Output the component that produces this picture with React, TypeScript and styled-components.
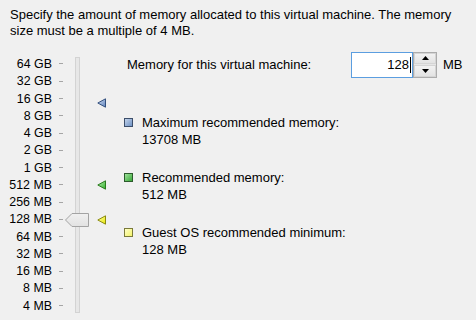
import React from "react";
import styled, { createGlobalStyle } from "styled-components";

const GlobalStyle = createGlobalStyle`
  html, body { margin: 0; padding: 0; background: #f0f0f0; }
  body {
    font-family: "Liberation Sans", Arial, sans-serif;
    font-size: 13px;
    color: #000;
    width: 476px;
    height: 320px;
    overflow: hidden;
  }
`;

const Page = styled.div`
  width: 476px;
  height: 320px;
  background: #f0f0f0;
`;

const Intro = styled.p`
  margin: 0;
  padding: 7px 10px 0 10px;
  line-height: 16px;
`;

const Main = styled.div`
  margin-top: 11px;
  display: flex;
  align-items: flex-start;
  height: 270px;
`;

const ROW = 17.28;
const FIRST = 14; // center of first row relative to Main

const Scale = styled.div`
  display: grid;
  grid-auto-rows: ${ROW}px;
  padding-top: ${FIRST - ROW / 2}px;
  width: 63px;
`;

const ScaleRow = styled.div`
  display: flex;
  align-items: center;
`;

const ScaleLabel = styled.span`
  width: 52px;
  text-align: right;
  white-space: nowrap;
  font-size: 12.4px;
  line-height: 14px;
`;

const Tick = styled.span`
  margin-left: 7px;
  width: 4px;
  height: 1px;
  background: #a5a5a5;
`;

const SliderArea = styled.div`
  position: relative;
  width: 43px;
  height: 270px;
  flex: none;
`;

const Track = styled.div`
  margin: 7px 0 0 12px;
  width: 3px;
  height: 254px;
  border: 1px solid #d3d3d3;
  background: #e7e7e7;
`;

const Thumb = styled.svg`
  position: absolute;
  left: 2px;
  width: 24px;
  height: 14px;
`;

const Marker = styled.svg`
  position: absolute;
  left: 34px;
  width: 10px;
  height: 10px;
`;

const Content = styled.div`
  margin-left: 18px;
  display: flex;
  flex-direction: column;
  flex: 1;
`;

const MemoryRow = styled.div`
  display: flex;
  align-items: center;
  height: 27px;
  margin-top: 1px;
`;

const MemoryLabel = styled.span`
  margin-left: 3px;
  width: 224px;
  white-space: nowrap;
`;

const SpinBox = styled.div`
  display: flex;
  height: 26px;
`;

const Field = styled.div`
  width: 59px;
  height: 24px;
  border: 1px solid #5b9ee0;
  background: #fff;
  display: flex;
  align-items: center;
  justify-content: flex-end;
  padding-right: 1px;
  box-sizing: content-box;
`;

const FieldText = styled.span`
  line-height: 14px;
`;

const Caret = styled.span`
  display: inline-block;
  width: 1px;
  height: 16px;
  background: #000;
  margin-left: 1px;
`;

const Spinner = styled.div`
  display: flex;
  flex-direction: column;
  width: 22px;
  height: 24px;
  border: 1px solid #acacac;
  background: #e6e6e6;
  gap: 1px;
`;

const SpinButton = styled.div`
  flex: 1;
  display: flex;
  align-items: center;
  justify-content: center;
  background: linear-gradient(#f2f2f2, #e3e3e3);
  border: 1px solid #d5d5d5;
`;

const Unit = styled.span`
  margin-left: 6px;
`;

const Legend = styled.div`
  display: flex;
  flex-direction: column;
  gap: 21px;
  margin-top: 36px;
`;

const LegendItem = styled.div`
  display: grid;
  grid-template-columns: 18px auto;
  line-height: 17px;
`;

const Swatch = styled.span<{ $fill: string; $border: string }>`
  width: 7px;
  height: 7px;
  margin-top: 4px;
  border: 1px solid ${(p) => p.$border};
  background: ${(p) => p.$fill};
`;

const LegendValue = styled.span`
  grid-column: 2;
`;

const posFor = (mb: number) => FIRST + (16 - Math.log2(mb)) * ROW;

const markers = [
  { mb: 13708, fill: "url(#gBlue)", stroke: "#33507e" },
  { mb: 512, fill: "url(#gGreen)", stroke: "#2a7a1e" },
  { mb: 128, fill: "url(#gYellow)", stroke: "#8a8a10" },
];

const labels = [
  "64 GB", "32 GB", "16 GB", "8 GB", "4 GB", "2 GB", "1 GB",
  "512 MB", "256 MB", "128 MB", "64 MB", "32 MB", "16 MB", "8 MB", "4 MB",
];

const legend = [
  { title: "Maximum recommended memory:", value: "13708 MB", fill: "linear-gradient(135deg,#c3d3ea,#6f92c4)", border: "#3c4e6a" },
  { title: "Recommended memory:", value: "512 MB", fill: "linear-gradient(135deg,#9ee29a,#3aa83a)", border: "#2c5a2c" },
  { title: "Guest OS recommended minimum:", value: "128 MB", fill: "linear-gradient(135deg,#ffffc8,#f3f36a)", border: "#7a7a3a" },
];

export default function App() {
  const value = 128;
  return (
    <Page>
      <GlobalStyle />
      <svg width="0" height="0" style={{ position: "absolute" }}>
        <defs>
          <linearGradient id="gBlue" x1="0" y1="0" x2="1" y2="1">
            <stop offset="0" stopColor="#d4e0f2" />
            <stop offset="1" stopColor="#5d82bd" />
          </linearGradient>
          <linearGradient id="gGreen" x1="0" y1="0" x2="1" y2="1">
            <stop offset="0" stopColor="#b8f0b0" />
            <stop offset="1" stopColor="#2fae2a" />
          </linearGradient>
          <linearGradient id="gYellow" x1="0" y1="0" x2="1" y2="1">
            <stop offset="0" stopColor="#ffffb0" />
            <stop offset="1" stopColor="#e8e800" />
          </linearGradient>
          <linearGradient id="gThumb" x1="0" y1="0" x2="0" y2="1">
            <stop offset="0" stopColor="#f0f0f0" />
            <stop offset="1" stopColor="#e2e2e2" />
          </linearGradient>
        </defs>
      </svg>
      <Intro>
        Specify the amount of memory allocated to this virtual machine. The memory size must be a multiple of 4 MB.
      </Intro>
      <Main>
        <Scale>
          {labels.map((l) => (
            <ScaleRow key={l}>
              <ScaleLabel>{l}</ScaleLabel>
              <Tick />
            </ScaleRow>
          ))}
        </Scale>
        <SliderArea>
          <Track />
          <Thumb viewBox="0 0 24 14" style={{ top: posFor(value) - 7 }}>
            <path d="M0.5 7 L7 0.5 H23.5 V13.5 H7 Z" fill="url(#gThumb)" stroke="#a3a3a3" />
          </Thumb>
          {markers.map((m) => (
            <Marker key={m.mb} viewBox="0 0 10 10" style={{ top: posFor(m.mb) - 5 }}>
              <path d="M0.8 5 L8.5 0.8 V9.2 Z" fill={m.fill} stroke={m.stroke} strokeLinejoin="round" />
            </Marker>
          ))}
        </SliderArea>
        <Content>
          <MemoryRow>
            <MemoryLabel>Memory for this virtual machine:</MemoryLabel>
            <SpinBox>
              <Field>
                <FieldText>{value}</FieldText>
                <Caret />
              </Field>
              <Spinner>
                <SpinButton>
                  <svg width="7" height="4" viewBox="0 0 7 4"><path d="M3.5 0 L7 4 H0 Z" fill="#000" /></svg>
                </SpinButton>
                <SpinButton>
                  <svg width="7" height="4" viewBox="0 0 7 4"><path d="M0 0 H7 L3.5 4 Z" fill="#000" /></svg>
                </SpinButton>
              </Spinner>
            </SpinBox>
            <Unit>MB</Unit>
          </MemoryRow>
          <Legend>
            {legend.map((it) => (
              <LegendItem key={it.title}>
                <Swatch $fill={it.fill} $border={it.border} />
                <span>{it.title}</span>
                <LegendValue>{it.value}</LegendValue>
              </LegendItem>
            ))}
          </Legend>
        </Content>
      </Main>
    </Page>
  );
}
